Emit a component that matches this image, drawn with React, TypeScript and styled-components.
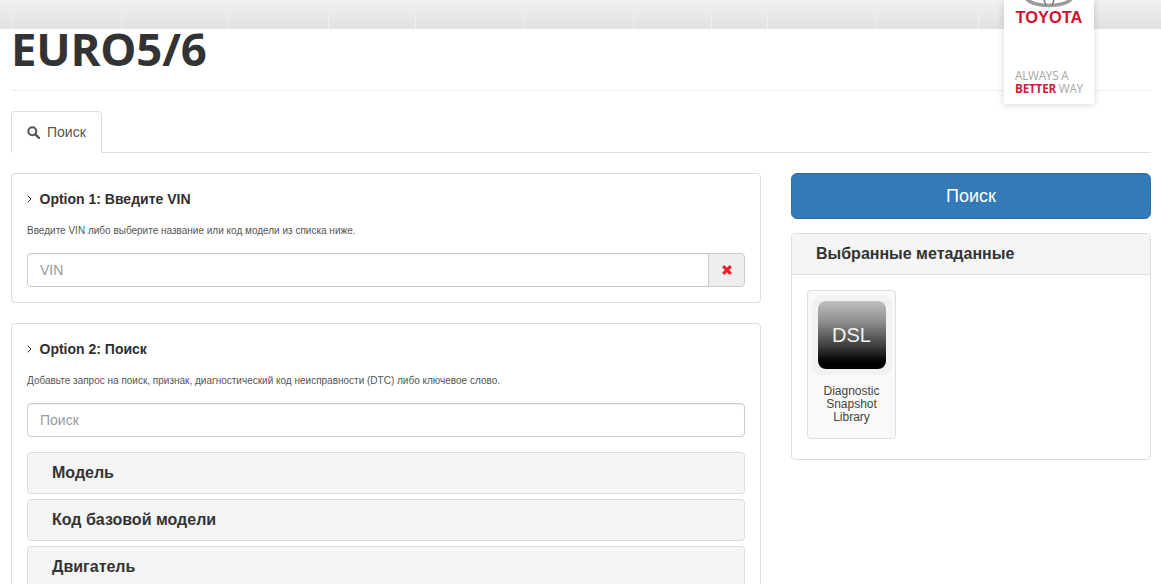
import React from "react";
import styled, { createGlobalStyle } from "styled-components";

const Global = createGlobalStyle`
  html, body { margin: 0; padding: 0; background: #fff; overflow: hidden; }
  body { font-family: "Liberation Sans", Arial, sans-serif; color: #333; }
  * { box-sizing: border-box; }
`;

const Page = styled.div`
  width: 1161px;
  height: 584px;
  overflow: hidden;
  position: relative;
`;

const TopBar = styled.div`
  height: 29px;
  background: linear-gradient(#f1f1f1, #e1e1e1);
  display: flex;
`;

const TopItem = styled.div<{ $w: number }>`
  width: ${(p) => p.$w}px;
  flex: none;
  border-right: 1px solid #f0f0f0;
  margin-top: 13px;
`;

const LogoCard = styled.div`
  position: absolute;
  left: 1004px;
  top: 0;
  width: 90px;
  height: 104px;
  background: #fff;
  box-shadow: 0 1px 7px rgba(0, 0, 0, 0.16);
  display: flex;
  flex-direction: column;
  align-items: center;
`;

const LogoMark = styled.svg`
  display: block;
  width: 58px;
  height: 8px;
`;

const LogoName = styled.div`
  font-family: "Liberation Sans", sans-serif;
  font-weight: 700;
  font-size: 16.4px;
  line-height: 16px;
  color: #d1122f;
  margin-top: 1px;
  white-space: nowrap;
`;

const Slogan = styled.div`
  margin-top: 44px;
  width: 68px;
  font-family: "Open Sans", sans-serif;
  font-size: 11.7px;
  line-height: 13px;
  letter-spacing: -0.2px;
  color: #a5a5a5;
  white-space: nowrap;
  strong { color: #c9203d; font-weight: 700; }
`;

const Content = styled.div`
  padding: 0 10px 0 11px;
`;

const Title = styled.h1`
  margin: 0;
  height: 62px;
  font-family: "Open Sans", sans-serif;
  font-weight: 700;
  font-size: 45.5px;
  line-height: 38px;
  letter-spacing: -0.2px;
  color: #333;
  border-bottom: 1px solid #eee;
`;

const Tabs = styled.div`
  margin-top: 20px;
  height: 42px;
  border-bottom: 1px solid #ddd;
  display: flex;
`;

const Tab = styled.div`
  width: 91px;
  height: 42px;
  background: #fff;
  border: 1px solid #ddd;
  border-bottom-color: #fff;
  border-radius: 4px 4px 0 0;
  display: flex;
  align-items: center;
  gap: 7px;
  padding-left: 15px;
  font-size: 14px;
  color: #555;
`;

const Columns = styled.div`
  margin-top: 20px;
  display: grid;
  grid-template-columns: 750px 360px;
  gap: 30px;
  align-items: start;
`;

const LeftColumn = styled.div`
  display: flex;
  flex-direction: column;
  gap: 20px;
`;

const RightColumn = styled.div`
  display: flex;
  flex-direction: column;
  gap: 14px;
`;

const OptionPanel = styled.section<{ $h: number }>`
  height: ${(p) => p.$h}px;
  border: 1px solid #ddd;
  border-radius: 4px;
  padding: 15px 15px 0;
`;

const OptionTitle = styled.div`
  display: flex;
  align-items: center;
  gap: 7.5px;
  height: 20px;
  font-size: 14px;
  font-weight: 700;
  color: #2f2f2f;
`;

const Hint = styled.p`
  margin: 15px 0 0;
  font-size: 10px;
  line-height: 14px;
  color: #555;
`;

const InputGroup = styled.div`
  margin-top: 15px;
  display: flex;
  height: 34px;
`;

const Field = styled.div<{ $grouped?: boolean }>`
  flex: 1;
  height: 34px;
  border: 1px solid #ccc;
  border-radius: ${(p) => (p.$grouped ? "4px 0 0 4px" : "4px")};
  padding-left: 12px;
  font-size: 14px;
  line-height: 32px;
  color: #999;
  box-shadow: inset 0 1px 1px rgba(0, 0, 0, 0.075);
`;

const Addon = styled.div`
  width: 37px;
  margin-left: -1px;
  border: 1px solid #ccc;
  border-radius: 0 4px 4px 0;
  background: #eee;
  display: flex;
  align-items: center;
  justify-content: center;
`;

const Accordion = styled.div`
  margin-top: 15px;
  display: flex;
  flex-direction: column;
  gap: 5px;
`;

const AccordionRow = styled.div`
  height: 42px;
  flex: none;
  background: #f5f5f5;
  border: 1px solid #ddd;
  border-radius: 4px;
  padding-left: 24px;
  font-size: 16px;
  font-weight: 700;
  line-height: 39px;
  color: #333;
`;

const SearchButton = styled.button`
  height: 46px;
  width: 100%;
  border: 1px solid #2e6da4;
  border-radius: 6px;
  background: #337ab7;
  color: #fff;
  font-family: "Liberation Sans", sans-serif;
  font-size: 18px;
  padding: 0;
`;

const MetaPanel = styled.section`
  height: 227px;
  border: 1px solid #ddd;
  border-radius: 4px;
  overflow: hidden;
`;

const MetaHeading = styled.div`
  height: 41px;
  background: #f5f5f5;
  border-bottom: 1px solid #ddd;
  padding-left: 24px;
  font-size: 16px;
  font-weight: 700;
  line-height: 39px;
  color: #333;
`;

const MetaBody = styled.div`
  padding: 15px;
`;

const MetaCard = styled.div`
  width: 89px;
  height: 149px;
  background: #f9f9f9;
  border: 1px solid #ddd;
  border-radius: 4px;
  padding: 4px 3px 0;
  display: flex;
  flex-direction: column;
  align-items: center;
`;

const Thumb = styled.div`
  width: 80px;
  height: 80px;
  flex: none;
  background: #f2f2f2;
  border-radius: 10px;
  padding: 6px;
`;

const ThumbInner = styled.div`
  width: 100%;
  height: 100%;
  border-radius: 8px;
  background: linear-gradient(#c0c0c0 0%, #8f8f8f 30%, #383838 68%, #000 90%);
  color: #f2f2f2;
  font-size: 20px;
  line-height: 68px;
  text-align: center;
`;

const CardLabel = styled.div`
  margin-top: 10px;
  font-size: 12px;
  line-height: 13px;
  text-align: center;
  color: #444;
`;

const Search = () => (
  <svg width="13" height="13" viewBox="0 0 13 13" fill="none" stroke="#555" strokeWidth="2">
    <circle cx="5.3" cy="5.3" r="4" />
    <path d="M8.2 8.2 L12 12" strokeLinecap="round" strokeWidth="2.4" />
  </svg>
);

const Chevron = () => (
  <svg width="5" height="8" viewBox="0 0 5 8" fill="none" stroke="#333" strokeWidth="1">
    <path d="M0.7 0.7 L4 4 L0.7 7.3" />
  </svg>
);

const Cross = () => (
  <svg width="10" height="10" viewBox="0 0 10 10" fill="none" stroke="#e8212b" strokeWidth="3.2">
    <path d="M1.2 1.2 L8.8 8.8 M8.8 1.2 L1.2 8.8" />
  </svg>
);

const dividers = [12, 110, 107, 100, 87, 109, 109, 78, 56, 109, 102];
const rows = ["Модель", "Код базовой модели", "Двигатель"];

export default function App() {
  return (
    <Page>
      <Global />
      <TopBar>
        {dividers.map((w, i) => (
          <TopItem key={i} $w={w} />
        ))}
      </TopBar>
      <LogoCard>
        <LogoMark viewBox="0 0 58 8">
          <path d="M6 -2 C12 8 46 8 52 -2" fill="none" stroke="#9a9a9a" strokeWidth="3.5" />
          <path d="M24 0 L26 5 M34 0 L32 5" stroke="#777" strokeWidth="1.5" />
        </LogoMark>
        <LogoName>TOYOTA</LogoName>
        <Slogan>
          ALWAYS A
          <br />
          <strong>BETTER</strong> WAY
        </Slogan>
      </LogoCard>
      <Content>
        <Title>EURO5/6</Title>
        <Tabs>
          <Tab>
            <Search />
            Поиск
          </Tab>
        </Tabs>
        <Columns>
          <LeftColumn>
            <OptionPanel $h={130}>
              <OptionTitle>
                <Chevron />
                Option 1: Введите VIN
              </OptionTitle>
              <Hint>Введите VIN либо выберите название или код модели из списка ниже.</Hint>
              <InputGroup>
                <Field $grouped>VIN</Field>
                <Addon>
                  <Cross />
                </Addon>
              </InputGroup>
            </OptionPanel>
            <OptionPanel $h={300}>
              <OptionTitle>
                <Chevron />
                Option 2: Поиск
              </OptionTitle>
              <Hint>Добавьте запрос на поиск, признак, диагностический код неисправности (DTC) либо ключевое слово.</Hint>
              <InputGroup>
                <Field>Поиск</Field>
              </InputGroup>
              <Accordion>
                {rows.map((r) => (
                  <AccordionRow key={r}>{r}</AccordionRow>
                ))}
              </Accordion>
            </OptionPanel>
          </LeftColumn>
          <RightColumn>
            <SearchButton>Поиск</SearchButton>
            <MetaPanel>
              <MetaHeading>Выбранные метаданные</MetaHeading>
              <MetaBody>
                <MetaCard>
                  <Thumb>
                    <ThumbInner>DSL</ThumbInner>
                  </Thumb>
                  <CardLabel>
                    Diagnostic
                    <br />
                    Snapshot
                    <br />
                    Library
                  </CardLabel>
                </MetaCard>
              </MetaBody>
            </MetaPanel>
          </RightColumn>
        </Columns>
      </Content>
    </Page>
  );
}
